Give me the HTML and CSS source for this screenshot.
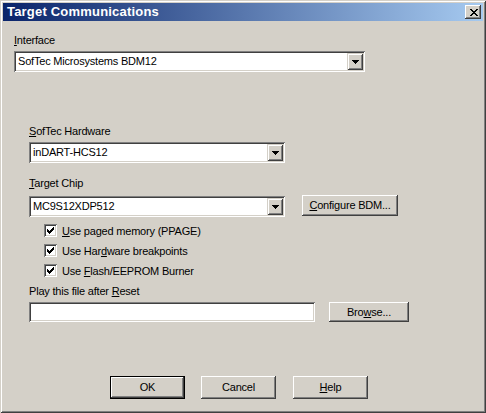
FILE: index.html
```html
<!DOCTYPE html>
<html>
<head>
<meta charset="utf-8">
<title>Target Communications</title>
<link rel="stylesheet" href="styles.css">
</head>
<body>
<div class="window">
  <div class="titlebar">
    <span class="title">Target Communications</span>
    <span class="close">
      <svg width="8" height="7" viewBox="0 0 8 7" shape-rendering="crispEdges"><path d="M0 0h2v1h-2z M6 0h2v1h-2z M1 1h2v1h-2z M5 1h2v1h-2z M2 2h4v1h-4z M3 3h2v1h-2z M2 4h4v1h-4z M1 5h2v1h-2z M5 5h2v1h-2z M0 6h2v1h-2z M6 6h2v1h-2z" fill="#000"/></svg>
    </span>
  </div>
  <div class="client">
    <div class="label"><u>I</u>nterface</div>
    <div class="combo combo-interface">
      <span class="combo-text">SofTec Microsystems BDM12</span>
      <span class="combo-btn"><svg width="7" height="4" viewBox="0 0 7 4" shape-rendering="crispEdges"><path d="M0 0h7v1h-1v1h-1v1h-1v1h-1v-1h-1v-1h-1v-1h-1z" fill="#000"/></svg></span>
    </div>

    <div class="section">
      <div class="label label-hw"><u>S</u>ofTec Hardware</div>
      <div class="combo combo-small">
        <span class="combo-text">inDART-HCS12</span>
        <span class="combo-btn"><svg width="7" height="4" viewBox="0 0 7 4" shape-rendering="crispEdges"><path d="M0 0h7v1h-1v1h-1v1h-1v1h-1v-1h-1v-1h-1v-1h-1z" fill="#000"/></svg></span>
      </div>

      <div class="label label-chip"><u>T</u>arget Chip</div>
      <div class="chip-row">
        <div class="combo combo-small">
          <span class="combo-text">MC9S12XDP512</span>
          <span class="combo-btn"><svg width="7" height="4" viewBox="0 0 7 4" shape-rendering="crispEdges"><path d="M0 0h7v1h-1v1h-1v1h-1v1h-1v-1h-1v-1h-1v-1h-1z" fill="#000"/></svg></span>
        </div>
        <div class="button btn-config"><u>C</u>onfigure BDM...</div>
      </div>

      <div class="checks">
        <div class="check-row">
          <span class="checkbox"><svg width="7" height="7" viewBox="0 0 7 7" shape-rendering="crispEdges"><path d="M6 0h1v1h-1z M5 1h2v1h-2z M0 2h1v1h-1z M4 2h3v1h-3z M0 3h2v1h-2z M3 3h3v1h-3z M0 4h5v1h-5z M1 5h3v1h-3z M2 6h1v1h-1z" fill="#000"/></svg></span>
          <span class="check-label"><u>U</u>se paged memory (PPAGE)</span>
        </div>
        <div class="check-row">
          <span class="checkbox"><svg width="7" height="7" viewBox="0 0 7 7" shape-rendering="crispEdges"><path d="M6 0h1v1h-1z M5 1h2v1h-2z M0 2h1v1h-1z M4 2h3v1h-3z M0 3h2v1h-2z M3 3h3v1h-3z M0 4h5v1h-5z M1 5h3v1h-3z M2 6h1v1h-1z" fill="#000"/></svg></span>
          <span class="check-label">Use Har<u>d</u>ware breakpoints</span>
        </div>
        <div class="check-row">
          <span class="checkbox"><svg width="7" height="7" viewBox="0 0 7 7" shape-rendering="crispEdges"><path d="M6 0h1v1h-1z M5 1h2v1h-2z M0 2h1v1h-1z M4 2h3v1h-3z M0 3h2v1h-2z M3 3h3v1h-3z M0 4h5v1h-5z M1 5h3v1h-3z M2 6h1v1h-1z" fill="#000"/></svg></span>
          <span class="check-label">Use <u>F</u>lash/EEPROM Burner</span>
        </div>
      </div>

      <div class="label label-play">Play this file after <u>R</u>eset</div>
      <div class="file-row">
        <div class="textfield"></div>
        <div class="button btn-browse">Bro<u>w</u>se...</div>
      </div>
    </div>

    <div class="footer">
      <div class="button btn-default">OK</div>
      <div class="button">Cancel</div>
      <div class="button"><u>H</u>elp</div>
    </div>
  </div>
</div>
</body>
</html>
```
FILE: styles.css
```css
* { box-sizing: border-box; }
html, body { margin: 0; padding: 0; }
body {
  width: 486px;
  height: 413px;
  overflow: hidden;
  background: #d4d0c8;
  font-family: "Liberation Sans", Arial, sans-serif;
  font-size: 11px;
  letter-spacing: -0.2px;
  color: #000;
}
u { text-decoration: underline; text-underline-offset: 1px; }

.window {
  width: 486px;
  height: 413px;
  padding: 3px;
  background: #d4d0c8;
  box-shadow: inset 1px 1px #d4d0c8, inset -1px -1px #404040, inset 2px 2px #ffffff, inset -2px -2px #808080;
  display: flex;
  flex-direction: column;
}

.titlebar {
  height: 18px;
  flex: none;
  margin-bottom: 1px;
  background: linear-gradient(to right, #0a246a, #a6caf0);
  display: flex;
  align-items: center;
  justify-content: space-between;
  padding: 0 2px 0 4px;
}
.title {
  color: #fff;
  font-weight: bold;
  font-size: 13px;
  letter-spacing: 0.2px;
  line-height: 18px;
  white-space: nowrap;
}
.close {
  width: 16px;
  height: 14px;
  background: #d4d0c8;
  box-shadow: inset -1px -1px #404040, inset 1px 1px #ffffff, inset -2px -2px #808080;
  display: flex;
  align-items: center;
  justify-content: center;
  padding-left: 1px;
}
.close svg { display: block; }

.client {
  flex: 1;
  padding: 12px 0 0 11px;
  display: flex;
  flex-direction: column;
  align-items: flex-start;
}

.label {
  line-height: 13px;
  height: 13px;
  white-space: nowrap;
}

.combo {
  height: 21px;
  background: #fff;
  box-shadow: inset 1px 1px #808080, inset -1px -1px #ffffff, inset 2px 2px #404040, inset -2px -2px #d4d0c8;
  display: flex;
  align-items: stretch;
  padding: 2px;
  margin-top: 4px;
}
.combo-interface { width: 351px; }
.combo-small { width: 256px; }
.combo-text {
  flex: 1;
  padding-left: 2px;
  line-height: 17px;
  white-space: nowrap;
  overflow: hidden;
}
.combo-btn {
  width: 16px;
  background: #d4d0c8;
  box-shadow: inset 1px 1px #d4d0c8, inset -1px -1px #404040, inset 2px 2px #ffffff, inset -2px -2px #808080;
  display: flex;
  align-items: center;
  justify-content: center;
  padding-left: 1px;
}
.combo-btn svg { display: block; }

.section {
  margin-left: 15px;
  display: flex;
  flex-direction: column;
  align-items: flex-start;
}
.label-hw { margin-top: 53px; }
.label-chip { margin-top: 14px; }

.chip-row {
  display: flex;
  align-items: flex-start;
  margin-top: 5px;
}
.chip-row .combo { margin-top: 1px; }

.button {
  height: 23px;
  width: 75px;
  background: #d4d0c8;
  box-shadow: inset -1px -1px #404040, inset 1px 1px #ffffff, inset -2px -2px #808080;
  display: flex;
  align-items: center;
  justify-content: center;
  white-space: nowrap;
  padding-bottom: 1px;
}
.btn-config {
  width: 96px;
  height: 21px;
  margin-left: 17px;
}

.checks {
  margin-left: 15px;
  margin-top: 4px;
  display: flex;
  flex-direction: column;
}
.check-row {
  height: 20px;
  display: flex;
  align-items: flex-start;
}
.checkbox {
  width: 13px;
  height: 13px;
  margin-top: 3px;
  background: #fff;
  box-shadow: inset 1px 1px #808080, inset -1px -1px #ffffff, inset 2px 2px #404040, inset -2px -2px #d4d0c8;
  display: flex;
  align-items: center;
  justify-content: center;
}
.checkbox svg { display: block; }
.check-label {
  margin-left: 5px;
  margin-top: 4px;
  line-height: 13px;
  white-space: nowrap;
}

.label-play { margin-top: 4px; }

.file-row {
  display: flex;
  align-items: flex-start;
  margin-top: 4px;
}
.textfield {
  width: 286px;
  height: 20px;
  background: #fff;
  box-shadow: inset 1px 1px #808080, inset -1px -1px #ffffff, inset 2px 2px #404040, inset -2px -2px #d4d0c8;
}
.btn-browse {
  width: 80px;
  height: 20px;
  margin-left: 14px;
}

.footer {
  display: flex;
  margin-top: 54px;
  margin-left: 96px;
  gap: 16px;
}
.footer .button:nth-child(3) { margin-left: 1px; }
.btn-default {
  border: 1px solid #000;
  box-shadow: inset -1px -1px #404040, inset 1px 1px #ffffff, inset -2px -2px #808080;
}
```
